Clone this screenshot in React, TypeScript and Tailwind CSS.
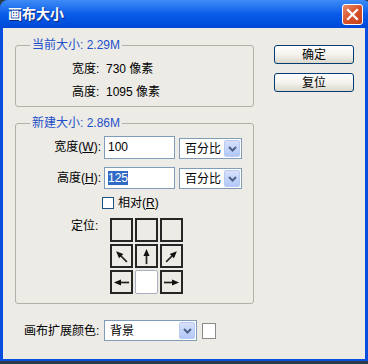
import React from 'react';

const FONT = { fontFamily: '"Liberation Sans", "Noto Sans CJK SC", sans-serif' };

// XP-style dropdown arrow button
function DropArrow() {
  return (
    <div className="w-[16px] h-[17px] mr-[1px] rounded-[2px] border border-[#b9c9ef] bg-gradient-to-b from-[#d6e2fc] to-[#b2c8f8] flex items-center justify-center">
      <svg width="9" height="6" viewBox="0 0 9 6">
        <path d="M1 1 L4.5 4.5 L8 1" fill="none" stroke="#4d6185" strokeWidth="2" />
      </svg>
    </div>
  );
}

function Select({ value, width }: { value: string; width: string }) {
  return (
    <div className={`${width} h-[21px] bg-white border border-[#7f9db9] flex items-center justify-between`}>
      <span className="pl-[5px] text-[12px] text-black">{value}</span>
      <DropArrow />
    </div>
  );
}

function Button({ label }: { label: string }) {
  return (
    <div className="w-[80px] h-[19px] rounded-[3px] border border-[#003c74] bg-gradient-to-b from-white via-[#f4f3ee] to-[#dcd8cc] flex items-center justify-center text-[12px] text-black">
      {label}
    </div>
  );
}

type Dir = 'nw' | 'n' | 'ne' | 'w' | 'e';

function Arrow({ dir }: { dir: Dir }) {
  const rot: Record<Dir, number> = { n: 0, ne: 45, e: 90, w: -90, nw: -45 };
  return (
    <svg width="19" height="19" viewBox="0 0 20 20">
      <g transform={`rotate(${rot[dir]} 10 10)`}>
        <line x1="10" y1="18" x2="10" y2="7" stroke="#222" strokeWidth="1.8" />
        <polygon points="10,2 13.2,9.5 6.8,9.5" fill="#111" />
      </g>
    </svg>
  );
}

function Cell({ children, center }: { children?: React.ReactNode; center?: boolean }) {
  if (center) {
    return <div className="w-[23px] h-[24px] bg-white border border-[#a8b0c0] rounded-[2px]" />;
  }
  return (
    <div className="w-[23px] h-[24px] border-2 border-[#262626] bg-[#ecebe6] flex items-center justify-center">
      {children}
    </div>
  );
}

function Legend({ children }: { children: React.ReactNode }) {
  return (
    <legend className="ml-[14px] px-[2px] text-[12px] leading-[14px] text-[#1e4fc8]">{children}</legend>
  );
}

export default function App() {
  return (
    <div className="w-[368px] h-[364px] overflow-hidden bg-[#2c3c46]" style={FONT}>
      <div className="h-[361px] w-[371px] flex flex-col rounded-t-[8px] bg-[#0a4ee0]">
        {/* Title bar */}
        <div className="h-[28px] shrink-0 rounded-t-[8px] bg-gradient-to-b from-[#3d8cf7] via-[#0a5ce8] to-[#0048d8] flex items-center justify-between pl-[8px] pr-[8px]">
          <span className="text-[14px] font-bold text-white [text-shadow:1px_1px_0_#0a2a80]">画布大小</span>
          <div className="w-[21px] h-[21px] rounded-[3px] border border-white bg-gradient-to-br from-[#ea8a6a] via-[#d8532c] to-[#c3401a] flex items-center justify-center">
            <svg width="13" height="13" viewBox="0 0 13 13">
              <path d="M2 2 L11 11 M11 2 L2 11" stroke="white" strokeWidth="2.2" strokeLinecap="square" />
            </svg>
          </div>
        </div>

        {/* Client area */}
        <div className="flex-1 mx-[3px] w-[362px] mb-[2px] bg-[#ecebe6] flex flex-col text-[12px] text-black">
          <div className="flex">
            <div className="pl-[12px] pt-[10px]">
              {/* Current size */}
              <fieldset className="w-[239px] border border-[#b2b0a8] rounded-[3px]">
                <Legend>当前大小: 2.29M</Legend>
                <div className="pl-[56px] pt-[9px] pb-[6px]">
                  <div className="leading-[16px]">宽度:&nbsp; 730 像素</div>
                  <div className="leading-[16px] mt-[7px]">高度:&nbsp; 1095 像素</div>
                </div>
              </fieldset>

              {/* New size */}
              <fieldset className="mt-[9px] w-[239px] border border-[#b2b0a8] rounded-[3px]">
                <Legend>新建大小: 2.86M</Legend>
                <div className="pt-[5px] pb-[9px]">
                  <div className="flex items-center">
                    <span className="w-[85px] text-right">
                      宽度(<span className="underline">W</span>):
                    </span>
                    <div className="ml-[3px] w-[71px] h-[23px] bg-white border border-[#7f9db9] flex items-center pl-[3px]">
                      100
                    </div>
                    <div className="ml-[4px] mt-[3px]">
                      <Select value="百分比" width="w-[63px]" />
                    </div>
                  </div>
                  <div className="flex items-center mt-[8px]">
                    <span className="w-[85px] text-right">
                      高度(<span className="underline">H</span>):
                    </span>
                    <div className="ml-[3px] w-[71px] h-[22px] bg-white border border-[#7f9db9] flex items-center pl-[3px]">
                      <span className="bg-[#316ac5] text-white leading-[14px]">125</span>
                    </div>
                    <div className="ml-[4px] mt-[1px]">
                      <Select value="百分比" width="w-[63px]" />
                    </div>
                  </div>
                  <div className="flex items-center mt-[5px] pl-[86px]">
                    <div className="w-[12px] h-[12px] bg-white border border-[#1c5180]" />
                    <span className="ml-[4px]">
                      相对(<span className="underline">R</span>)
                    </span>
                  </div>
                  <div className="flex mt-[6px] pl-[55px]">
                    <span className="w-[39px] leading-[14px] pt-[1px]">定位:</span>
                    <div className="grid grid-cols-[23px_23px_23px] gap-[2px]">
                      <Cell />
                      <Cell />
                      <Cell />
                      <Cell><Arrow dir="nw" /></Cell>
                      <Cell><Arrow dir="n" /></Cell>
                      <Cell><Arrow dir="ne" /></Cell>
                      <Cell><Arrow dir="w" /></Cell>
                      <Cell center />
                      <Cell><Arrow dir="e" /></Cell>
                    </div>
                  </div>
                </div>
              </fieldset>
            </div>

            {/* Buttons */}
            <div className="ml-[20px] pt-[17px] flex flex-col gap-[9px]">
              <Button label="确定" />
              <Button label="复位" />
            </div>
          </div>

          {/* Canvas extension colour */}
          <div className="flex items-center mt-[16px] pl-[21px]">
            <span className="w-[80px]">画布扩展颜色:</span>
            <Select value="背景" width="w-[93px]" />
            <div className="ml-[5px] w-[14px] h-[16px] bg-white border border-[#8a8a8a]" />
          </div>
        </div>
      </div>
    </div>
  );
}
